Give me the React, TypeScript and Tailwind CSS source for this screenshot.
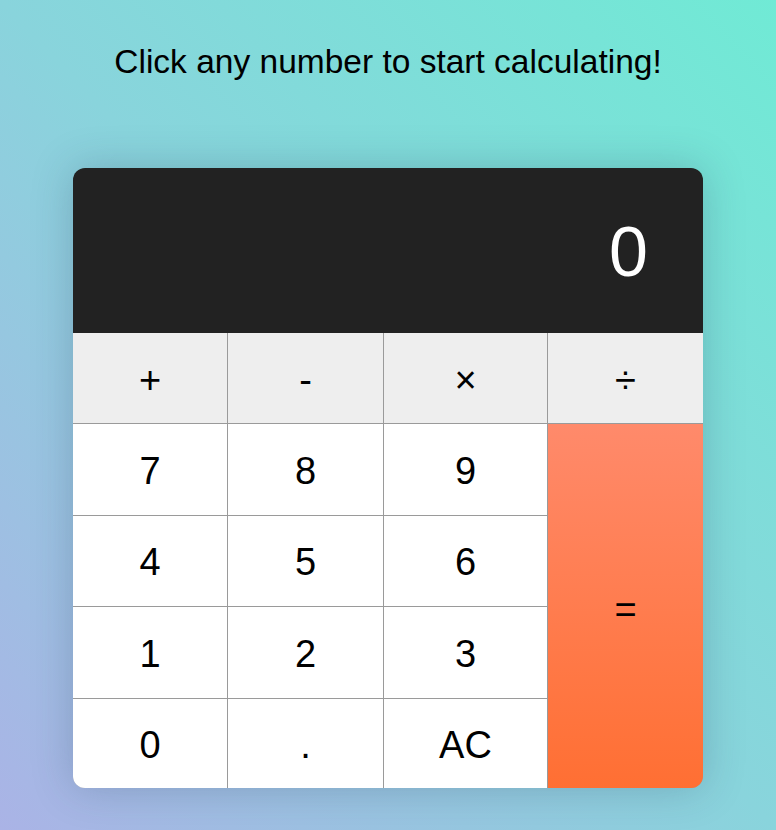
const ops = ["+", "-", "×", "÷"];
const rows = [
  ["7", "8", "9"],
  ["4", "5", "6"],
  ["1", "2", "3"],
  ["0", ".", "AC"],
];

export default function App() {
  return (
    <div
      className="min-h-screen w-full bg-[linear-gradient(to_top_right,#aab3e6_0%,#89d4dc_50%,#70ead5_100%)] pt-[43px]"
      style={{ fontFamily: '"Liberation Sans", Arial, sans-serif' }}
    >
      <h1 className="text-center text-[33.5px] leading-[38px] text-black">
        Click any number to start calculating!
      </h1>

      <div className="mx-auto mt-[87px] w-[630px] overflow-hidden rounded-xl shadow-[0_0_40px_rgba(40,60,90,0.25)]">
        <div className="flex h-[165px] items-center justify-end bg-[#222222] pr-[55px] pt-[4px] text-[70px] text-white">
          0
        </div>

        <div className="grid grid-cols-[154px_155px_163px_155px] grid-rows-[90px_91px_90px_91px_89px] gap-px bg-[#9a9a9a]">
          {ops.map((op) => (
            <button
              key={op}
              className="flex items-center justify-center bg-[#eeeeee] pt-[4px] text-[38px] text-black"
            >
              {op}
            </button>
          ))}
          {rows.map((row, i) =>
            row.map((key, j) => (
              <button
                key={key}
                className="flex items-center justify-center bg-white pt-[3px] text-[38px] text-black"
                style={{ gridRow: i + 2, gridColumn: j + 1 }}
              >
                {key}
              </button>
            ))
          )}
          <button className="col-start-4 row-span-4 row-start-2 flex items-center justify-center bg-[linear-gradient(to_bottom,#ff8a6b,#ff6f33)] pt-[8px] text-[38px] text-black">
            =
          </button>
        </div>
      </div>
    </div>
  );
}
